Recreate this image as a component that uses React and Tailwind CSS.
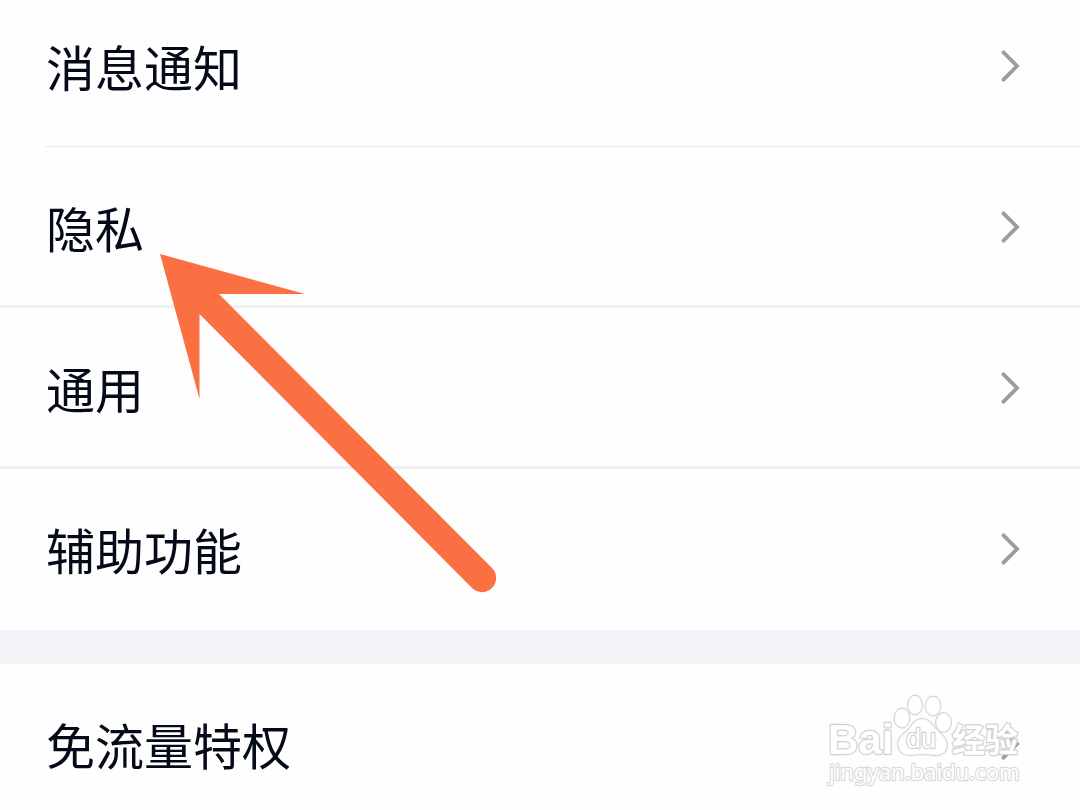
const groups = [
  [
    { label: "消息通知", divider: "inset" },
    { label: "隐私", divider: "full" },
    { label: "通用", divider: "full" },
    { label: "辅助功能", divider: "none" },
  ],
  [{ label: "免流量特权", divider: "none" }],
];

function Chevron() {
  return (
    <svg
      className="h-9 w-6 shrink-0"
      viewBox="0 0 24 36"
      fill="none"
      stroke="#9c9c9c"
      strokeWidth="3.8"
      strokeLinecap="round"
      strokeLinejoin="miter"
      aria-hidden="true"
    >
      <path d="M7.5 4.3 L21 18 L7.5 31.7" />
    </svg>
  );
}

function SettingRow({ label, divider }) {
  return (
    <li className="flex h-[161px] flex-col">
      <button
        type="button"
        className="flex h-[160px] w-full shrink-0 items-center justify-between pr-[60px] pl-[46px] text-left"
      >
        <span className="text-[49px] leading-[70px] text-[#050a18]">{label}</span>
        <Chevron />
      </button>
      {divider === "inset" && <div className="ml-[45px] h-px bg-[#e8ecef]" />}
      {divider === "full" && <div className="-mt-[2px] h-[3px] bg-[#eff0f4]" />}
    </li>
  );
}

// Pointer annotation laid over the list
function PointerArrow() {
  return (
    <svg
      className="pointer-events-none absolute top-[254px] left-[160px] h-[340px] w-[340px]"
      viewBox="160 254 340 340"
      fill="#fa7042"
      aria-hidden="true"
    >
      <path d="M160 254 L305 294 L219 294 L492 568 A14 14 0 0 1 472 588 L199.5 314 L199.5 399 Z" />
    </svg>
  );
}

function Watermark() {
  return (
    <svg
      className="pointer-events-none absolute right-[50px] bottom-[10px] h-[120px] w-[220px]"
      viewBox="0 0 220 120"
      fill="#ffffff"
      stroke="#d2d2d2"
      strokeWidth="2.4"
      strokeLinejoin="round"
      paintOrder="stroke"
    >
      <text x="18" y="74" fontFamily="Liberation Sans, sans-serif" fontWeight="700" fontSize="42">
        Bai
      </text>
      <g fillOpacity="0.8" strokeWidth="2">
        <ellipse cx="92" cy="38" rx="7.5" ry="9.5" />
        <ellipse cx="105" cy="25" rx="7" ry="9.5" />
        <ellipse cx="123" cy="26" rx="7.5" ry="9.5" />
        <ellipse cx="133.5" cy="42.5" rx="7.5" ry="9.5" />
        <path d="M112 39 C119 39 122 44 126 49 C131 54 137 58 137 65 C137 72 131 76 124 75 C116 74 109 74 101 75 C93 76 88 71 88 64 C88 57 94 54 99 49 C103 43 106 39 112 39 Z" />
      </g>
      <text x="96" y="68" fontFamily="Liberation Sans, sans-serif" fontSize="27">
        du
      </text>
      <text x="142" y="72" fontFamily="Noto Sans CJK SC, sans-serif" fontWeight="700" fontSize="33">
        经验
      </text>
      <text x="19" y="100" fontFamily="Noto Sans, sans-serif" fontSize="22" stroke="#dadada">
        jingyan.baidu.com
      </text>
    </svg>
  );
}

export default function App() {
  return (
    <main className="relative h-screen overflow-hidden bg-[#f4f5f9] font-['Noto_Sans_CJK_SC',sans-serif]">
      <div className="-mt-[14px] flex flex-col gap-[34px]">
        {groups.map((rows) => (
          <ul key={rows[0].label} className="bg-[#fefefe]">
            {rows.map((row) => (
              <SettingRow key={row.label} {...row} />
            ))}
          </ul>
        ))}
      </div>
      <PointerArrow />
      <Watermark />
    </main>
  );
}
